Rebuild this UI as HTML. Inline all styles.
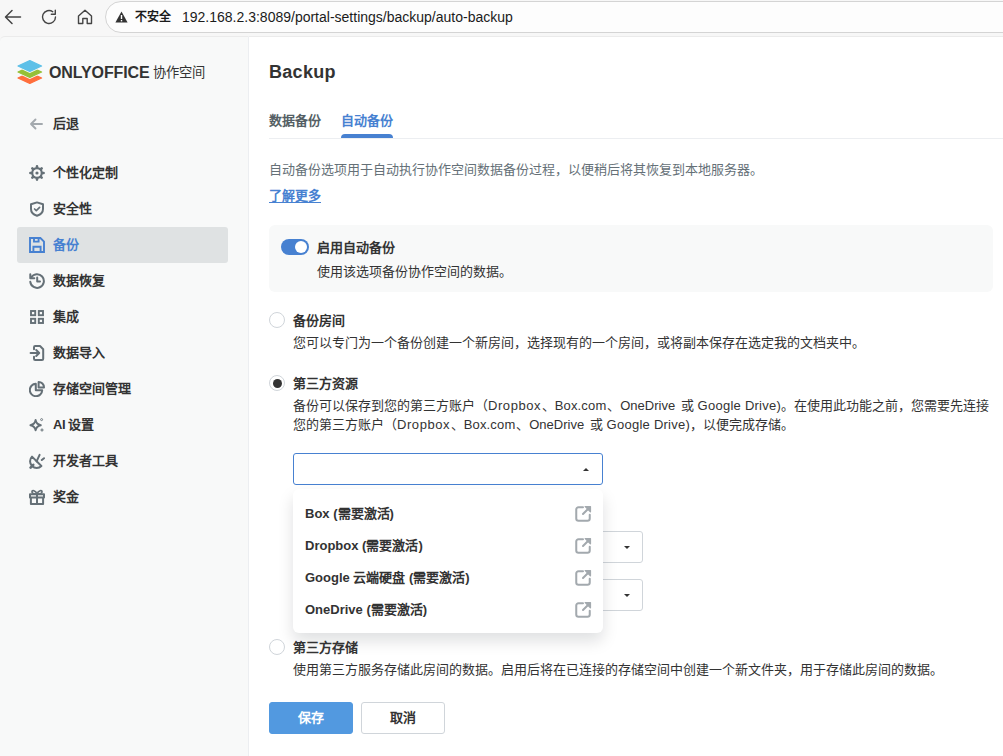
<!DOCTYPE html>
<html lang="zh-CN">
<head>
<meta charset="utf-8">
<title>Backup</title>
<style>
*{box-sizing:border-box;margin:0;padding:0}
html,body{width:1003px;height:756px;overflow:hidden;background:#fff}
body{font-family:"Liberation Sans",sans-serif;font-size:13px;color:#333;position:relative}
.abs{position:absolute;white-space:nowrap}
/* browser chrome */
#chrome{position:absolute;left:0;top:0;width:1003px;height:50px;background:#f7f7f7}
#urlbar{position:absolute;left:105px;top:1px;width:920px;height:32px;border:1px solid #d4d4d4;border-radius:16px;background:#fdfdfd}
#url{left:135px;top:9px;font-size:14px;color:#1b1b1b;line-height:16px}
#url b{font-weight:bold;font-size:12px;margin-right:11px;position:relative;top:-1px}
/* page */
#side{position:absolute;left:0;top:36px;width:249px;height:720px;background:#f8f9f9;border-right:1px solid #eceef1;border-top-left-radius:5px;border-top:1px solid #ebebeb}
#main{position:absolute;left:249px;top:36px;width:754px;height:720px;background:#fff;border-top:1px solid #ebebeb}
.logo-t{left:49px;top:64px;font-size:16px;font-weight:bold;color:#333;line-height:18px;letter-spacing:-0.1px}
.logo-c{left:153px;top:64px;font-size:13.3px;color:#333;line-height:18px}
.mi{position:absolute;left:17px;width:211px;height:36px;border-radius:3px}
.mi.sel{background:#dfe2e3}
.mi span{position:absolute;left:36px;top:10px;font-size:13px;font-weight:bold;color:#333;line-height:16px;white-space:nowrap}
.mi.sel span{color:#4781d1}
.mi svg{position:absolute;left:12px;top:10px;width:16px;height:16px}
h1{position:absolute;left:269px;top:60px;letter-spacing:.3px;font-size:18px;line-height:24px;font-weight:bold;color:#333}
.tab{font-size:13px;font-weight:bold;line-height:16px;color:#555f65;top:113px}
.tab.on{color:#4781d1}
.gray{color:#657077}
.b{font-weight:bold}
.la{letter-spacing:.57px;margin-right:.6px}
.lb{letter-spacing:.15px;margin-right:.9px}
.lo{margin-left:2.1px;margin-right:.1px}
.lc{letter-spacing:.25px}
.txt{font-size:13px;line-height:16px;margin-top:1px}
.radio{position:absolute;width:16px;height:16px;border:1px solid #d0d5da;border-radius:50%;background:#fff}
.radio.on::after{content:"";position:absolute;left:2.5px;top:2.5px;width:9px;height:9px;border-radius:50%;background:#333}
.combo{position:absolute;height:32px;border:1px solid #d0d5da;border-radius:3px;background:#fff}
.combo i{position:absolute;right:12px;top:14px;width:0;height:0;border-left:3px solid transparent;border-right:3px solid transparent;border-top:3px solid #333}
.combo.open{border-color:#4781d1}
.combo.open i{border-top:none;border-bottom:3px solid #333;right:13px}
#dd{position:absolute;left:293px;top:489px;width:310px;height:144px;background:#fff;border-radius:6px;box-shadow:0 8px 16px rgba(4,15,27,.13)}
.ddi{position:absolute;left:12px;margin-top:1px;font-size:13px;font-weight:600;color:#333;line-height:16px;white-space:nowrap}
.ext{position:absolute;left:281px;width:18px;height:18px;margin-top:-.5px}
.btn{position:absolute;top:702px;width:84px;height:32px;border-radius:3px;font-size:13px;font-weight:bold;line-height:30px;text-align:center}
</style>
</head>
<body>
<div id="chrome">
  <svg class="abs" style="left:3px;top:8px" width="20" height="18" viewBox="0 0 20 18"><path d="M17.5 9H3M9 2.5L2.5 9L9 15.5" fill="none" stroke="#444" stroke-width="1.5" stroke-linecap="round" stroke-linejoin="round"/></svg>
  <svg class="abs" style="left:40px;top:8px" width="18" height="18" viewBox="0 0 18 18"><path d="M15.5 9A6.5 6.5 0 1 1 12.8 3.7" fill="none" stroke="#444" stroke-width="1.4" stroke-linecap="round"/><path d="M15.3 2.2V6.2H11.3" fill="none" stroke="#444" stroke-width="1.4" stroke-linecap="round" stroke-linejoin="round"/></svg>
  <svg class="abs" style="left:76px;top:8px" width="18" height="18" viewBox="0 0 18 18"><path d="M2.5 8L9 2.2L15.5 8V15.5H11.2V10.5H6.8V15.5H2.5Z" fill="none" stroke="#444" stroke-width="1.4" stroke-linejoin="round"/></svg>
  <div id="urlbar"></div>
  <svg class="abs" style="left:115px;top:11px" width="13" height="12" viewBox="0 0 13 12"><path d="M6.5 0.5L12.6 11.5H0.4Z" fill="#333"/><rect x="5.8" y="4" width="1.4" height="4" fill="#fff"/><rect x="5.8" y="9" width="1.4" height="1.4" fill="#fff"/></svg>
  <div id="url" class="abs"><b>不安全</b>192.168.2.3:8089/portal-settings/backup/auto-backup</div>
</div>
<div id="side"></div>
<div id="main"></div>

<!-- logo -->
<svg class="abs" style="left:16px;top:59px" width="28" height="26" viewBox="0 0 28 26">
  <g stroke-linejoin="round">
  <path id="lg" d="M13.8 13.6L2 19L13.8 24.4L25.6 19Z" fill="#ff6f3d" stroke="#ff6f3d" stroke-width="1.2"/>
  <path d="M13.8 7.6L2 13L13.8 18.4L25.6 13Z" fill="none" stroke="#f8f9f9" stroke-width="3"/>
  <path d="M13.8 7.6L2 13L13.8 18.4L25.6 13Z" fill="#95c038" stroke="#95c038" stroke-width="1.2"/>
  <path d="M13.8 1.6L2 7L13.8 12.4L25.6 7Z" fill="none" stroke="#f8f9f9" stroke-width="3"/>
  <path d="M13.8 1.6L2 7L13.8 12.4L25.6 7Z" fill="#5dc0e8" stroke="#5dc0e8" stroke-width="1.2"/>
  </g>
</svg>
<div class="abs logo-t">ONLYOFFICE</div>
<div class="abs logo-c">协作空间</div>

<!-- back -->
<svg class="abs" style="left:29px;top:117px" width="14" height="14" viewBox="0 0 14 14"><path d="M13 7H2M6.5 2.5L2 7L6.5 11.5" fill="none" stroke="#a3a9ae" stroke-width="1.9" stroke-linecap="round" stroke-linejoin="round"/></svg>
<div class="abs" style="left:53px;top:116px;font-size:13px;font-weight:bold;line-height:16px;color:#333">后退</div>

<!-- menu -->
<div class="mi" style="top:155px"><svg viewBox="0 0 16 16"><g fill="none" stroke="#657077"><circle cx="8" cy="8" r="4.8" stroke-width="2.2"/><g stroke-width="2.6" stroke-linecap="round"><path d="M8 1.4V2.4M8 13.6V14.6M1.4 8H2.4M13.6 8H14.6M3.33 3.33L4.04 4.04M11.96 11.96L12.67 12.67M3.33 12.67L4.04 11.96M11.96 4.04L12.67 3.33"/></g></g><circle cx="8" cy="8" r="1.6" fill="#657077"/></svg><span>个性化定制</span></div>
<div class="mi" style="top:191px"><svg viewBox="0 0 16 16"><g fill="none" stroke="#657077" stroke-width="2" stroke-linejoin="round" stroke-linecap="round"><path d="M8 1.4L14 3.3V8C14 11.3 11.6 13.6 8 14.8C4.4 13.6 2 11.3 2 8V3.3Z"/><path d="M5.6 8L7.3 9.6L10.6 6.3" stroke-width="1.7"/></g></svg><span>安全性</span></div>
<div class="mi sel" style="top:227px"><svg viewBox="0 0 16 16"><g fill="none" stroke="#4781d1" stroke-width="1.9" stroke-linejoin="miter"><path d="M1 1H11.4L15 4.6V15H1Z"/><path d="M5 1V4.6H9.6V1"/><path d="M4.4 15V9.8H11.6V15"/></g></svg><span>备份</span></div>
<div class="mi" style="top:263px"><svg viewBox="0 0 16 16"><g fill="none" stroke="#657077" stroke-width="2" stroke-linecap="round" stroke-linejoin="round"><path d="M2.2 4.6A6.8 6.8 0 1 1 1.3 8.8"/><path d="M1.3 1.2V5.2H5.3"/><path d="M8.2 4.4V8.6H11"/></g></svg><span>数据恢复</span></div>
<div class="mi" style="top:299px"><svg viewBox="0 0 16 16"><g fill="none" stroke="#657077" stroke-width="1.9"><rect x="2" y="2" width="4.2" height="4.2"/><rect x="9.8" y="2" width="4.2" height="4.2"/><rect x="2" y="9.8" width="4.2" height="4.2"/><rect x="9.8" y="9.8" width="4.2" height="4.2"/></g></svg><span>集成</span></div>
<div class="mi" style="top:335px"><svg viewBox="0 0 16 16"><g fill="none" stroke="#657077" stroke-width="2" stroke-linecap="round" stroke-linejoin="round"><path d="M5 4.2V2.2C5 1.5 5.5 1 6.2 1H11L14.2 4.2V13.8C14.2 14.5 13.7 15 13 15H6.2C5.5 15 5 14.5 5 13.8V11.8"/><path d="M1.6 8H10M7.2 5L10.2 8L7.2 11"/></g></svg><span>数据导入</span></div>
<div class="mi" style="top:371px"><svg viewBox="0 0 16 16"><g fill="none" stroke="#657077" stroke-width="2" stroke-linejoin="round"><path d="M6.8 2.8A6.2 6.2 0 1 0 13.2 9.2H6.8Z"/><path d="M9.6 1A5.4 5.4 0 0 1 15 6.4H9.6Z"/></g></svg><span>存储空间管理</span></div>
<div class="mi" style="top:407px"><svg viewBox="0 0 16 16"><g fill="none" stroke="#657077" stroke-linejoin="round"><path d="M6.6 3C7.1 6.2 8.3 7.5 11.8 8.2C8.3 8.9 7.1 10.2 6.6 13.4C6.1 10.2 4.9 8.9 1.4 8.2C4.9 7.5 6.1 6.2 6.6 3Z" stroke-width="1.9"/><circle cx="12.6" cy="2.6" r="1" stroke-width="0.9"/><path d="M13 11.4V14.6M11.4 13H14.6" stroke-width="1"/></g></svg><span><i style="font-style:normal;letter-spacing:-.5px">AI </i>设置</span></div>
<div class="mi" style="top:443px"><svg viewBox="0 0 16 16"><g fill="none" stroke="#657077" stroke-width="2" stroke-linecap="round" stroke-linejoin="round"><path d="M3 3.6A6.6 6.6 0 0 0 12.4 13Z"/><path d="M7.6 8.4L10.6 1.8"/><path d="M12.8 7L15 5.2"/><path d="M4.2 11.8L1.6 14.6" stroke-width="2.6"/></g></svg><span>开发者工具</span></div>
<div class="mi" style="top:479px"><svg viewBox="0 0 16 16"><g fill="none" stroke="#657077" stroke-width="2" stroke-linejoin="round"><path d="M1.9 8.6V14.9H14.1V8.6"/><rect x="1" y="5.2" width="14" height="3.4"/><path d="M8 5.2V14.9"/><path d="M8 5C6.6 1.2 2.8 0.8 3 3C3.1 4.5 5.2 5 8 5C10.8 5 12.9 4.5 13 3C13.2 0.8 9.4 1.2 8 5Z" stroke-width="1.7"/></g></svg><span>奖金</span></div>

<!-- main -->
<h1>Backup</h1>
<div class="abs tab" style="left:269px">数据备份</div>
<div class="abs tab on" style="left:341px">自动备份</div>
<div class="abs" style="left:269px;top:138px;width:734px;height:1px;background:#eceef1"></div>
<div class="abs" style="left:341px;top:134px;width:52px;height:4px;background:#4781d1;border-radius:4px 4px 0 0"></div>

<div class="abs txt gray" style="left:269px;top:161px">自动备份选项用于自动执行协作空间数据备份过程，以便稍后将其恢复到本地服务器。</div>
<div class="abs txt b" style="left:269px;top:187px;color:#4781d1;text-decoration:underline;text-underline-offset:1.5px;text-decoration-thickness:1px">了解更多</div>

<div class="abs" style="left:269px;top:225px;width:724px;height:67px;background:#f8f9f9;border-radius:6px"></div>
<div class="abs" style="left:281px;top:239px;width:28px;height:16px;border-radius:8px;background:#4781d1"><div style="position:absolute;right:2px;top:2px;width:12px;height:12px;border-radius:50%;background:#fff"></div></div>
<div class="abs txt b" style="left:317px;top:239px">启用自动备份</div>
<div class="abs txt" style="left:317px;top:263px">使用该选项备份协作空间的数据。</div>

<div class="radio" style="left:269px;top:312px"></div>
<div class="abs txt b" style="left:293px;top:312px">备份房间</div>
<div class="abs txt" style="left:293px;top:334px">您可以专门为一个备份创建一个新房间，选择现有的一个房间，或将副本保存在选定我的文档夹中。</div>

<div class="radio on" style="left:269px;top:375px"></div>
<div class="abs txt b" style="left:293px;top:375px">第三方资源</div>
<div class="abs txt" style="left:293px;top:397px">备份可以保存到您的第三方账户（<span class="la">Dropbox</span>、<span class="lb">Box.com</span>、OneDrive<span class="lo"> 或 </span><span class="lc">Google Drive)</span>。在使用此功能之前，您需要先连接</div>
<div class="abs txt" style="left:293px;top:416px">您的第三方账户（<span class="la">Dropbox</span>、<span class="lb">Box.com</span>、OneDrive<span class="lo"> 或 </span><span class="lc">Google Drive)</span>，以便完成存储。</div>

<div class="combo open" style="left:293px;top:453px;width:310px"><i></i></div>
<div class="combo" style="left:493px;top:531px;width:150px"><i></i></div>
<div class="combo" style="left:493px;top:579px;width:150px"><i></i></div>

<div id="dd">
  <div class="ddi" style="top:16px">Box (需要激活)</div><svg class="ext" style="top:16px" viewBox="0 0 16 16"><g fill="none" stroke="#a3a9ae" stroke-width="1.8" stroke-linecap="round" stroke-linejoin="round"><path d="M8 2H4C2.9 2 2 2.9 2 4V12C2 13.1 2.9 14 4 14H12C13.1 14 14 13.1 14 12V8.6"/><path d="M8 8L13.6 2.4"/><path d="M10 1.4H14.6V6Z" fill="#a3a9ae" stroke-width="1.2"/></g></svg>
  <div class="ddi" style="top:48px">Dropbox (需要激活)</div><svg class="ext" style="top:48px" viewBox="0 0 16 16"><g fill="none" stroke="#a3a9ae" stroke-width="1.8" stroke-linecap="round" stroke-linejoin="round"><path d="M8 2H4C2.9 2 2 2.9 2 4V12C2 13.1 2.9 14 4 14H12C13.1 14 14 13.1 14 12V8.6"/><path d="M8 8L13.6 2.4"/><path d="M10 1.4H14.6V6Z" fill="#a3a9ae" stroke-width="1.2"/></g></svg>
  <div class="ddi" style="top:80px">Google 云端硬盘 (需要激活)</div><svg class="ext" style="top:80px" viewBox="0 0 16 16"><g fill="none" stroke="#a3a9ae" stroke-width="1.8" stroke-linecap="round" stroke-linejoin="round"><path d="M8 2H4C2.9 2 2 2.9 2 4V12C2 13.1 2.9 14 4 14H12C13.1 14 14 13.1 14 12V8.6"/><path d="M8 8L13.6 2.4"/><path d="M10 1.4H14.6V6Z" fill="#a3a9ae" stroke-width="1.2"/></g></svg>
  <div class="ddi" style="top:112px">OneDrive (需要激活)</div><svg class="ext" style="top:112px" viewBox="0 0 16 16"><g fill="none" stroke="#a3a9ae" stroke-width="1.8" stroke-linecap="round" stroke-linejoin="round"><path d="M8 2H4C2.9 2 2 2.9 2 4V12C2 13.1 2.9 14 4 14H12C13.1 14 14 13.1 14 12V8.6"/><path d="M8 8L13.6 2.4"/><path d="M10 1.4H14.6V6Z" fill="#a3a9ae" stroke-width="1.2"/></g></svg>
</div>

<div class="radio" style="left:269px;top:639px"></div>
<div class="abs txt b" style="left:293px;top:639px">第三方存储</div>
<div class="abs txt" style="left:293px;top:661px">使用第三方服务存储此房间的数据。启用后将在已连接的存储空间中创建一个新文件夹，用于存储此房间的数据。</div>

<div class="btn" style="left:269px;background:#5299e0;color:#fff;border:1px solid #5299e0">保存</div>
<div class="btn" style="left:361px;background:#fff;color:#333;border:1px solid #d0d5da">取消</div>
</body>
</html>
